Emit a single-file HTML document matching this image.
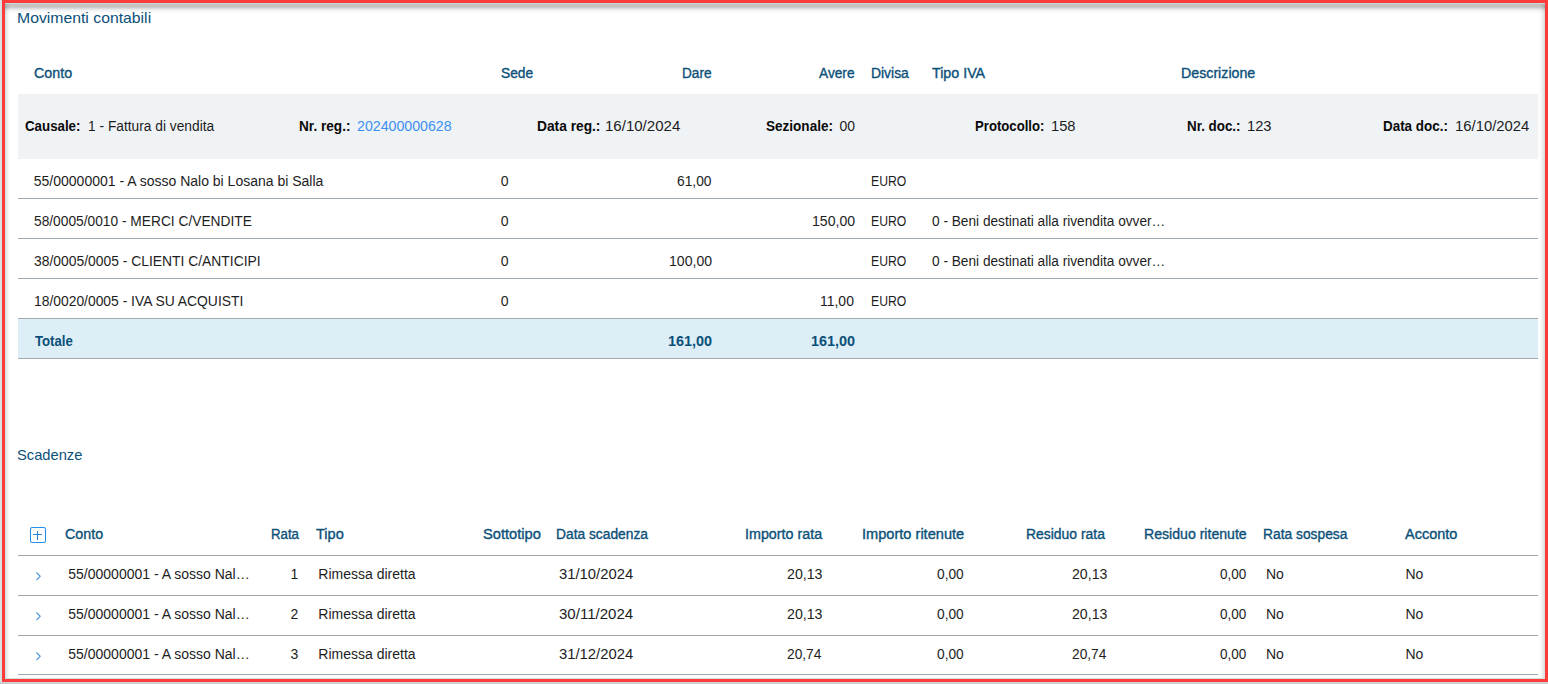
<!DOCTYPE html>
<html><head><meta charset="utf-8"><style>
html,body{margin:0;padding:0;}
body{width:1548px;height:684px;position:relative;overflow:hidden;background:#fff;font-family:"Liberation Sans",sans-serif;}
.t{position:absolute;white-space:nowrap;}
.ln{position:absolute;left:18px;width:1520px;height:1px;background:#a0a8b0;}
.band{position:absolute;left:18px;top:94px;width:1520px;height:65px;background:#f0f3f6;}
.tot{position:absolute;left:18px;top:319px;width:1520px;height:39px;background:#ddeef6;}
.chev{position:absolute;left:33px;}
.fr{position:absolute;}
</style></head><body>
<div class="band"></div>
<div class="tot"></div>
<div class="ln" style="top:198px"></div><div class="ln" style="top:238px"></div><div class="ln" style="top:278px"></div><div class="ln" style="top:318px"></div><div class="ln" style="top:358px"></div><div class="ln" style="top:555px"></div><div class="ln" style="top:595px"></div><div class="ln" style="top:635px"></div><div class="ln" style="top:674px"></div>
<div class="t" style="font-size:15px;color:#0b5079;line-height:20px;left:17.45px;top:8.10px;transform:scaleX(1.0516);transform-origin:0 0;">Movimenti contabili</div><div class="t" style="font-size:14px;color:#0b5079;-webkit-text-stroke:0.35px #0b5079;line-height:20px;left:33.68px;top:62.80px;transform:scaleX(1.0194);transform-origin:0 0;">Conto</div><div class="t" style="font-size:14px;color:#0b5079;-webkit-text-stroke:0.35px #0b5079;line-height:20px;left:500.62px;top:62.80px;transform:scaleX(0.9806);transform-origin:0 0;">Sede</div><div class="t" style="font-size:14px;color:#0b5079;-webkit-text-stroke:0.35px #0b5079;line-height:20px;left:682.23px;top:62.80px;transform:scaleX(0.9724);transform-origin:0 0;">Dare</div><div class="t" style="font-size:14px;color:#0b5079;-webkit-text-stroke:0.35px #0b5079;line-height:20px;left:819.10px;top:62.80px;transform:scaleX(0.9778);transform-origin:0 0;">Avere</div><div class="t" style="font-size:14px;color:#0b5079;-webkit-text-stroke:0.35px #0b5079;line-height:20px;left:871.11px;top:62.80px;transform:scaleX(0.9919);transform-origin:0 0;">Divisa</div><div class="t" style="font-size:14px;color:#0b5079;-webkit-text-stroke:0.35px #0b5079;line-height:20px;left:932.00px;top:62.80px;transform:scaleX(1.0192);transform-origin:0 0;">Tipo IVA</div><div class="t" style="font-size:14px;color:#0b5079;-webkit-text-stroke:0.35px #0b5079;line-height:20px;left:1180.58px;top:62.80px;transform:scaleX(1.0153);transform-origin:0 0;">Descrizione</div><div class="t" style="font-size:14px;color:#0a0a0a;font-weight:bold;line-height:20px;left:25.15px;top:116.00px;transform:scaleX(0.9500);transform-origin:0 0;">Causale:</div><div class="t" style="font-size:14px;color:#1d1d1d;line-height:20px;left:87.52px;top:116.00px;transform:scaleX(0.9827);transform-origin:0 0;">1 - Fattura di vendita</div><div class="t" style="font-size:14px;color:#0a0a0a;font-weight:bold;line-height:20px;left:299.03px;top:116.00px;transform:scaleX(0.9725);transform-origin:0 0;">Nr. reg.:</div><div class="t" style="font-size:14px;color:#3a8ff0;line-height:20px;left:357.29px;top:116.00px;transform:scaleX(1.0130);transform-origin:0 0;">202400000628</div><div class="t" style="font-size:14px;color:#0a0a0a;font-weight:bold;line-height:20px;left:536.62px;top:116.00px;transform:scaleX(0.9823);transform-origin:0 0;">Data reg.:</div><div class="t" style="font-size:14px;color:#1d1d1d;line-height:20px;left:605.43px;top:116.00px;transform:scaleX(1.0739);transform-origin:0 0;">16/10/2024</div><div class="t" style="font-size:14px;color:#0a0a0a;font-weight:bold;line-height:20px;left:765.63px;top:116.00px;transform:scaleX(0.9672);transform-origin:0 0;">Sezionale:</div><div class="t" style="font-size:14px;color:#1d1d1d;line-height:20px;left:839.55px;top:116.00px;">00</div><div class="t" style="font-size:14px;color:#0a0a0a;font-weight:bold;line-height:20px;left:974.76px;top:116.00px;transform:scaleX(0.9389);transform-origin:0 0;">Protocollo:</div><div class="t" style="font-size:14px;color:#1d1d1d;line-height:20px;left:1051.05px;top:116.00px;transform:scaleX(1.0500);transform-origin:0 0;">158</div><div class="t" style="font-size:14px;color:#0a0a0a;font-weight:bold;line-height:20px;left:1186.74px;top:116.00px;transform:scaleX(0.9556);transform-origin:0 0;">Nr. doc.:</div><div class="t" style="font-size:14px;color:#1d1d1d;line-height:20px;left:1247.05px;top:116.00px;transform:scaleX(1.0500);transform-origin:0 0;">123</div><div class="t" style="font-size:14px;color:#0a0a0a;font-weight:bold;line-height:20px;left:1383.04px;top:116.00px;transform:scaleX(0.9585);transform-origin:0 0;">Data doc.:</div><div class="t" style="font-size:14px;color:#1d1d1d;line-height:20px;left:1454.54px;top:116.00px;transform:scaleX(1.0609);transform-origin:0 0;">16/10/2024</div><div class="t" style="font-size:14px;color:#1d1d1d;line-height:20px;left:33.80px;top:171.00px;">55/00000001 - A sosso Nalo bi Losana bi Salla</div><div class="t" style="font-size:14px;color:#1d1d1d;line-height:20px;left:500.85px;top:171.00px;">0</div><div class="t" style="font-size:14px;color:#1d1d1d;line-height:20px;left:676.91px;top:171.00px;transform:scaleX(0.9853);transform-origin:0 0;">61,00</div><div class="t" style="font-size:14px;color:#1d1d1d;line-height:20px;left:871.13px;top:171.00px;transform:scaleX(0.8718);transform-origin:0 0;">EURO</div><div class="t" style="font-size:14px;color:#1d1d1d;line-height:20px;left:33.82px;top:211.00px;transform:scaleX(0.9823);transform-origin:0 0;">58/0005/0010 - MERCI C/VENDITE</div><div class="t" style="font-size:14px;color:#1d1d1d;line-height:20px;left:500.85px;top:211.00px;">0</div><div class="t" style="font-size:14px;color:#1d1d1d;line-height:20px;left:811.80px;top:211.00px;transform:scaleX(1.0049);transform-origin:0 0;">150,00</div><div class="t" style="font-size:14px;color:#1d1d1d;line-height:20px;left:871.13px;top:211.00px;transform:scaleX(0.8718);transform-origin:0 0;">EURO</div><div class="t" style="font-size:14px;color:#1d1d1d;line-height:20px;left:931.62px;top:211.00px;transform:scaleX(0.9763);transform-origin:0 0;">0 - Beni destinati alla rivendita ovver…</div><div class="t" style="font-size:14px;color:#1d1d1d;line-height:20px;left:33.81px;top:251.00px;transform:scaleX(0.9907);transform-origin:0 0;">38/0005/0005 - CLIENTI C/ANTICIPI</div><div class="t" style="font-size:14px;color:#1d1d1d;line-height:20px;left:500.85px;top:251.00px;">0</div><div class="t" style="font-size:14px;color:#1d1d1d;line-height:20px;left:669.20px;top:251.00px;transform:scaleX(1.0049);transform-origin:0 0;">100,00</div><div class="t" style="font-size:14px;color:#1d1d1d;line-height:20px;left:871.13px;top:251.00px;transform:scaleX(0.8718);transform-origin:0 0;">EURO</div><div class="t" style="font-size:14px;color:#1d1d1d;line-height:20px;left:931.62px;top:251.00px;transform:scaleX(0.9763);transform-origin:0 0;">0 - Beni destinati alla rivendita ovver…</div><div class="t" style="font-size:14px;color:#1d1d1d;line-height:20px;left:33.81px;top:291.00px;transform:scaleX(0.9900);transform-origin:0 0;">18/0020/0005 - IVA SU ACQUISTI</div><div class="t" style="font-size:14px;color:#1d1d1d;line-height:20px;left:500.85px;top:291.00px;">0</div><div class="t" style="font-size:14px;color:#1d1d1d;line-height:20px;left:820.10px;top:291.00px;transform:scaleX(0.9970);transform-origin:0 0;">11,00</div><div class="t" style="font-size:14px;color:#1d1d1d;line-height:20px;left:871.13px;top:291.00px;transform:scaleX(0.8718);transform-origin:0 0;">EURO</div><div class="t" style="font-size:14px;color:#0b5079;font-weight:bold;line-height:20px;left:35.10px;top:331.00px;transform:scaleX(0.9400);transform-origin:0 0;">Totale</div><div class="t" style="font-size:14px;color:#0b5079;font-weight:bold;line-height:20px;left:667.87px;top:331.00px;transform:scaleX(1.0293);transform-origin:0 0;">161,00</div><div class="t" style="font-size:14px;color:#0b5079;font-weight:bold;line-height:20px;left:810.97px;top:331.00px;transform:scaleX(1.0293);transform-origin:0 0;">161,00</div><div class="t" style="font-size:15px;color:#0b5079;line-height:20px;left:16.77px;top:444.70px;transform:scaleX(0.9792);transform-origin:0 0;">Scadenze</div><div class="t" style="font-size:14px;color:#0b5079;-webkit-text-stroke:0.35px #0b5079;line-height:20px;left:64.58px;top:524.00px;transform:scaleX(1.0194);transform-origin:0 0;">Conto</div><div class="t" style="font-size:14px;color:#0b5079;-webkit-text-stroke:0.35px #0b5079;line-height:20px;left:270.66px;top:524.00px;transform:scaleX(0.9448);transform-origin:0 0;">Rata</div><div class="t" style="font-size:14px;color:#0b5079;-webkit-text-stroke:0.35px #0b5079;line-height:20px;left:316.00px;top:524.00px;transform:scaleX(1.0385);transform-origin:0 0;">Tipo</div><div class="t" style="font-size:14px;color:#0b5079;-webkit-text-stroke:0.35px #0b5079;line-height:20px;left:482.85px;top:524.00px;transform:scaleX(1.0463);transform-origin:0 0;">Sottotipo</div><div class="t" style="font-size:14px;color:#0b5079;-webkit-text-stroke:0.35px #0b5079;line-height:20px;left:556.02px;top:524.00px;transform:scaleX(0.9849);transform-origin:0 0;">Data scadenza</div><div class="t" style="font-size:14px;color:#0b5079;-webkit-text-stroke:0.35px #0b5079;line-height:20px;left:745.38px;top:524.00px;transform:scaleX(1.0213);transform-origin:0 0;">Importo rata</div><div class="t" style="font-size:14px;color:#0b5079;-webkit-text-stroke:0.35px #0b5079;line-height:20px;left:862.26px;top:524.00px;transform:scaleX(1.0423);transform-origin:0 0;">Importo ritenute</div><div class="t" style="font-size:14px;color:#0b5079;-webkit-text-stroke:0.35px #0b5079;line-height:20px;left:1026.21px;top:524.00px;transform:scaleX(0.9937);transform-origin:0 0;">Residuo rata</div><div class="t" style="font-size:14px;color:#0b5079;-webkit-text-stroke:0.35px #0b5079;line-height:20px;left:1144.19px;top:524.00px;transform:scaleX(1.0069);transform-origin:0 0;">Residuo ritenute</div><div class="t" style="font-size:14px;color:#0b5079;-webkit-text-stroke:0.35px #0b5079;line-height:20px;left:1262.51px;top:524.00px;transform:scaleX(0.9859);transform-origin:0 0;">Rata sospesa</div><div class="t" style="font-size:14px;color:#0b5079;-webkit-text-stroke:0.35px #0b5079;line-height:20px;left:1404.60px;top:524.00px;transform:scaleX(1.0360);transform-origin:0 0;">Acconto</div><div class="t" style="font-size:14px;color:#1d1d1d;line-height:20px;left:68.30px;top:563.80px;">55/00000001 - A sosso Nal…</div><div class="t" style="font-size:14px;color:#1d1d1d;line-height:20px;left:290.40px;top:563.80px;">1</div><div class="t" style="font-size:14px;color:#1d1d1d;line-height:20px;left:318.30px;top:563.80px;">Rimessa diretta</div><div class="t" style="font-size:14px;color:#1d1d1d;line-height:20px;left:559.24px;top:563.80px;transform:scaleX(1.0580);transform-origin:0 0;">31/10/2024</div><div class="t" style="font-size:14px;color:#1d1d1d;line-height:20px;left:787.29px;top:563.80px;transform:scaleX(1.0121);transform-origin:0 0;">20,13</div><div class="t" style="font-size:14px;color:#1d1d1d;line-height:20px;left:936.52px;top:563.80px;transform:scaleX(0.9808);transform-origin:0 0;">0,00</div><div class="t" style="font-size:14px;color:#1d1d1d;line-height:20px;left:1071.69px;top:563.80px;transform:scaleX(1.0091);transform-origin:0 0;">20,13</div><div class="t" style="font-size:14px;color:#1d1d1d;line-height:20px;left:1219.53px;top:563.80px;transform:scaleX(0.9654);transform-origin:0 0;">0,00</div><div class="t" style="font-size:14px;color:#1d1d1d;line-height:20px;left:1265.90px;top:563.80px;">No</div><div class="t" style="font-size:14px;color:#1d1d1d;line-height:20px;left:1405.45px;top:563.80px;">No</div><div class="t" style="font-size:14px;color:#1d1d1d;line-height:20px;left:68.30px;top:603.80px;">55/00000001 - A sosso Nal…</div><div class="t" style="font-size:14px;color:#1d1d1d;line-height:20px;left:290.40px;top:603.80px;">2</div><div class="t" style="font-size:14px;color:#1d1d1d;line-height:20px;left:318.30px;top:603.80px;">Rimessa diretta</div><div class="t" style="font-size:14px;color:#1d1d1d;line-height:20px;left:559.23px;top:603.80px;transform:scaleX(1.0735);transform-origin:0 0;">30/11/2024</div><div class="t" style="font-size:14px;color:#1d1d1d;line-height:20px;left:787.29px;top:603.80px;transform:scaleX(1.0121);transform-origin:0 0;">20,13</div><div class="t" style="font-size:14px;color:#1d1d1d;line-height:20px;left:936.52px;top:603.80px;transform:scaleX(0.9808);transform-origin:0 0;">0,00</div><div class="t" style="font-size:14px;color:#1d1d1d;line-height:20px;left:1071.69px;top:603.80px;transform:scaleX(1.0091);transform-origin:0 0;">20,13</div><div class="t" style="font-size:14px;color:#1d1d1d;line-height:20px;left:1219.53px;top:603.80px;transform:scaleX(0.9654);transform-origin:0 0;">0,00</div><div class="t" style="font-size:14px;color:#1d1d1d;line-height:20px;left:1265.90px;top:603.80px;">No</div><div class="t" style="font-size:14px;color:#1d1d1d;line-height:20px;left:1405.45px;top:603.80px;">No</div><div class="t" style="font-size:14px;color:#1d1d1d;line-height:20px;left:68.30px;top:643.80px;">55/00000001 - A sosso Nal…</div><div class="t" style="font-size:14px;color:#1d1d1d;line-height:20px;left:290.40px;top:643.80px;">3</div><div class="t" style="font-size:14px;color:#1d1d1d;line-height:20px;left:318.30px;top:643.80px;">Rimessa diretta</div><div class="t" style="font-size:14px;color:#1d1d1d;line-height:20px;left:559.24px;top:643.80px;transform:scaleX(1.0580);transform-origin:0 0;">31/12/2024</div><div class="t" style="font-size:14px;color:#1d1d1d;line-height:20px;left:787.32px;top:643.80px;transform:scaleX(0.9824);transform-origin:0 0;">20,74</div><div class="t" style="font-size:14px;color:#1d1d1d;line-height:20px;left:936.52px;top:643.80px;transform:scaleX(0.9808);transform-origin:0 0;">0,00</div><div class="t" style="font-size:14px;color:#1d1d1d;line-height:20px;left:1071.72px;top:643.80px;transform:scaleX(0.9794);transform-origin:0 0;">20,74</div><div class="t" style="font-size:14px;color:#1d1d1d;line-height:20px;left:1219.53px;top:643.80px;transform:scaleX(0.9654);transform-origin:0 0;">0,00</div><div class="t" style="font-size:14px;color:#1d1d1d;line-height:20px;left:1265.90px;top:643.80px;">No</div><div class="t" style="font-size:14px;color:#1d1d1d;line-height:20px;left:1405.45px;top:643.80px;">No</div>
<svg style="position:absolute;left:29px;top:526px" width="18" height="18" viewBox="0 0 18 18"><rect x="1.5" y="1.5" width="15" height="15" rx="1.8" fill="none" stroke="#2590e8" stroke-width="1.1"/><path d="M8.5 5V14M4 8.5H13" stroke="#2a86d6" stroke-width="1.1"/></svg>
<svg class="chev" style="top:570px" width="12" height="12" viewBox="0 0 12 12"><path d="M3.5 2.5 L7.2 6.3 L3.5 10" fill="none" stroke="#4a92dc" stroke-width="1.1"/></svg><svg class="chev" style="top:610px" width="12" height="12" viewBox="0 0 12 12"><path d="M3.5 2.5 L7.2 6.3 L3.5 10" fill="none" stroke="#4a92dc" stroke-width="1.1"/></svg><svg class="chev" style="top:650px" width="12" height="12" viewBox="0 0 12 12"><path d="M3.5 2.5 L7.2 6.3 L3.5 10" fill="none" stroke="#4a92dc" stroke-width="1.1"/></svg>
<div class="fr" style="left:0;top:0;width:2px;height:684px;background:linear-gradient(90deg,#e2e2e2,#d2e0e0)"></div>
<div class="fr" style="left:0;top:682px;width:1548px;height:2px;background:linear-gradient(180deg,#d0dcdc,#c4c4c4)"></div>
<div class="fr" style="left:5px;top:3px;width:5px;height:676px;background:linear-gradient(90deg,#d2e0e0 0px,#d2e0e0 1px,rgba(0,0,0,.12) 1px,rgba(0,0,0,.067) 2px,rgba(0,0,0,.05) 3px,rgba(0,0,0,.02) 4px,rgba(0,0,0,0) 5px)"></div>
<div class="fr" style="left:1538px;top:3px;width:7px;height:676px;background:linear-gradient(270deg,#d2e0e0 0px,#d2e0e0 1px,rgba(0,0,0,.12) 1px,rgba(0,0,0,.08) 2px,rgba(0,0,0,.05) 3px,rgba(0,0,0,.027) 4px,rgba(0,0,0,.012) 5px,rgba(0,0,0,0) 7px)"></div>
<div class="fr" style="left:5px;top:3px;width:1540px;height:11px;background:linear-gradient(180deg,#c8d8d8 0px,#c8d8d8 1px,rgba(0,0,0,.231) 1px,rgba(0,0,0,.231) 4px,rgba(0,0,0,.169) 5px,rgba(0,0,0,.106) 6px,rgba(0,0,0,.067) 7px,rgba(0,0,0,.035) 8px,rgba(0,0,0,.02) 9px,rgba(0,0,0,.008) 10px,rgba(0,0,0,0) 11px)"></div>
<div class="fr" style="left:5px;top:678px;width:1540px;height:1px;background:#d2e0e0"></div>
<div class="fr" style="left:2px;top:0;width:1546px;height:3px;background:#ff3c3c"></div>
<div class="fr" style="left:2px;top:679px;width:1546px;height:3px;background:#ff3c3c"></div>
<div class="fr" style="left:2px;top:0;width:3px;height:682px;background:#ff3c3c"></div>
<div class="fr" style="left:1545px;top:0;width:3px;height:682px;background:#ff3c3c"></div>
</body></html>
